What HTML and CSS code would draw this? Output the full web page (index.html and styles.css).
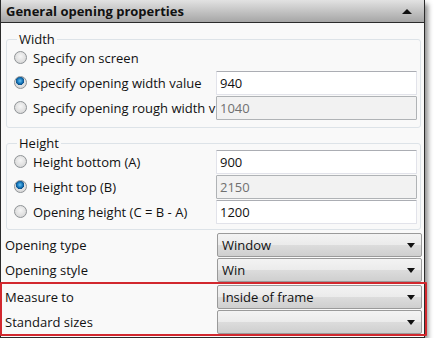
FILE: index.html
```html
<!DOCTYPE html>
<html lang="en">
<head>
    <meta charset="UTF-8">
    <meta name="viewport" content="width=device-width, initial-scale=1.0">
    <title>General opening properties</title>
    <link rel="stylesheet" href="styles.css">
</head>
<body>

<div class="panel">
    <div class="panel-header">
        <span class="panel-title">General opening properties</span>
        <span class="collapse-arrow"></span>
    </div>

    <div class="panel-body">
        <fieldset class="group">
            <legend>Width</legend>
            <div class="group-row">
                <label class="radio-label"><span class="radio"></span>Specify on screen</label>
            </div>
            <div class="group-row">
                <label class="radio-label"><span class="radio checked"></span>Specify opening width value</label>
                <input type="text" class="text-box" value="940">
            </div>
            <div class="group-row">
                <label class="radio-label"><span class="radio"></span>Specify opening rough width v</label>
                <input type="text" class="text-box" value="1040" disabled>
            </div>
        </fieldset>

        <fieldset class="group group-height">
            <legend>Height</legend>
            <div class="group-row">
                <label class="radio-label"><span class="radio"></span>Height bottom (A)</label>
                <input type="text" class="text-box" value="900">
            </div>
            <div class="group-row">
                <label class="radio-label"><span class="radio checked"></span>Height top (B)</label>
                <input type="text" class="text-box" value="2150" disabled>
            </div>
            <div class="group-row">
                <label class="radio-label"><span class="radio"></span>Opening height (C = B - A)</label>
                <input type="text" class="text-box" value="1200">
            </div>
        </fieldset>

        <div class="field-row first-field">
            <span class="field-label">Opening type</span>
            <div class="combo">Window<span class="combo-arrow"></span></div>
        </div>
        <div class="field-row">
            <span class="field-label">Opening style</span>
            <div class="combo">Win<span class="combo-arrow"></span></div>
        </div>

        <!-- highlighted rows -->
        <div class="highlight">
            <div class="field-row">
                <span class="field-label">Measure to</span>
                <div class="combo">Inside of frame<span class="combo-arrow"></span></div>
            </div>
            <div class="field-row">
                <span class="field-label">Standard sizes</span>
                <div class="combo"><span class="combo-arrow"></span></div>
            </div>
        </div>
    </div>
</div>

</body>
</html>
```

FILE: styles.css
```css
* {
    margin: 0;
    padding: 0;
    box-sizing: border-box;
}

body {
    font-family: 'Open Sans', 'Noto Sans', sans-serif;
    font-size: 13px;
    color: #111;
    background: #fff;
}

.panel {
    width: 425px;
    height: 338px;
    background: #f9f9f9;
    border: 1px solid #2b2b2b;
    border-top: none;
    box-shadow: 3px 4px 5px rgba(0, 0, 0, 0.45);
}

.panel-header {
    height: 23px;
    display: flex;
    align-items: center;
    justify-content: space-between;
    padding: 0 12px 0 5px;
    background: linear-gradient(#e2e2e2, #a6a6a6);
    border-bottom: 1px solid #2b2b2b;
}

.panel-title {
    font-weight: bold;
    font-size: 13px;
    color: #111;
}

.collapse-arrow {
    width: 0;
    height: 0;
    border-left: 5px solid transparent;
    border-right: 5px solid transparent;
    border-bottom: 5px solid #111;
}

.panel-body {
    padding-top: 8px;
}

/* Group boxes */
.group {
    margin: 0 3px 0 5px;
    padding: 0 3px 7px 7px;
    border: 1px solid #dde3e8;
    border-radius: 3px;
}

.group legend {
    margin-left: 3px;
    margin-bottom: -2px;
    padding: 0 2px;
    line-height: 16px;
    font-size: 13px;
}

.group-height {
    margin-top: 7px;
    padding-bottom: 5px;
}

.group-row {
    display: grid;
    grid-template-columns: 202px 201px;
    align-items: center;
    height: 25px;
}

.radio-label {
    display: flex;
    align-items: center;
    gap: 6px;
    white-space: nowrap;
    overflow: hidden;
}

.radio {
    flex: none;
    width: 13px;
    height: 13px;
    border-radius: 50%;
    border: 1px solid #8f9396;
    background: radial-gradient(circle at 50% 40%, #f6f6f6, #d0d0d0);
}

.radio.checked {
    background:
        radial-gradient(circle at 45% 35%, #6cc3f0 0, #1a7cc0 2.5px, #0b4f88 4px, transparent 4.5px),
        radial-gradient(circle at 50% 40%, #f6f6f6, #d0d0d0);
}

.text-box {
    height: 24px;
    width: 201px;
    font-family: inherit;
    font-size: 13px;
    color: #111;
    padding: 0 3px;
    background: #fff;
    border: 1px solid #e2e3ea;
    border-top-color: #abadb3;
    border-radius: 1px;
    outline: none;
}

.text-box:disabled {
    background: #f2f2f2;
    color: #707070;
    border-color: #b0b3b6;
}

/* Dropdown rows */
.field-row {
    display: grid;
    grid-template-columns: 212px 205px;
    align-items: center;
    height: 25px;
    padding-left: 4px;
}

.first-field {
    margin-top: 2px;
}

.combo {
    position: relative;
    height: 24px;
    line-height: 22px;
    padding-left: 4px;
    border: 1px solid #9a9a9a;
    border-radius: 2px;
    background: linear-gradient(#f3f3f3 0%, #ebebeb 50%, #dcdcdc 51%, #cfcfcf 100%);
}

.combo-arrow {
    position: absolute;
    right: 6px;
    top: 9px;
    width: 0;
    height: 0;
    border-left: 4px solid transparent;
    border-right: 4px solid transparent;
    border-top: 5px solid #111;
}

.highlight {
    margin: 0 -3px 0 -1px;
    border: 2px solid #d2282e;
    border-radius: 1px;
}

.highlight .field-row {
    padding-left: 3px;
}
```
